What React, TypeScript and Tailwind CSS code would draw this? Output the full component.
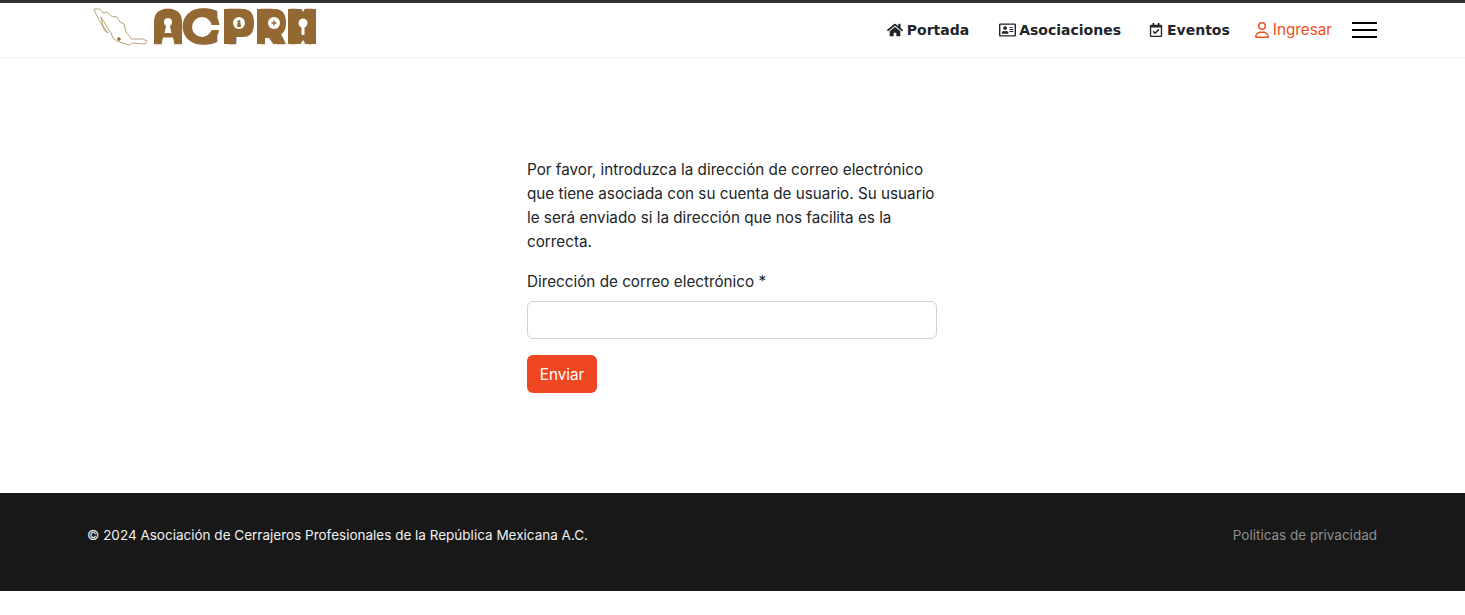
import { FaHome, FaRegAddressCard, FaRegCalendarCheck } from "react-icons/fa";
import { FaRegUser } from "react-icons/fa6";

const brown = "#936832";

// natural glyph width at 45px, squeezed into the slot each letter has in the logo
const letters = [
  { char: "A", x: 62, width: 26, natural: 34.8 },
  { char: "C", x: 91, width: 35, natural: 33 },
  { char: "P", x: 132, width: 27, natural: 33 },
  { char: "R", x: 165, width: 26, natural: 34.6 },
  { char: "M", x: 195, width: 27, natural: 44.8 },
];

function Logo() {
  return (
    <svg width="226" height="44" viewBox="0 0 226 44" className="block overflow-visible">
      <path
        d="M1 1 L7 1 L10 5 L14 4 L18 8 L24 9 L27 14 L31 16 L33 24 L37 29 L38 31 L50 31 L54 33 L52 36 L40 35 L36 37 L30 35 L24 33 L20 30 L18 25 L14 19 L10 12 L8 9 L10 18 L15 25 L12 23 L8 15 L4 8 Z"
        fill="none"
        stroke="#a88a5c"
        strokeWidth="0.8"
      />
      <circle cx="26" cy="31" r="1.8" fill={brown} />
      {/* solid backs so the letters read as heavy blocks */}
      <path d="M61 36 V14 Q61 1 75 1 Q89 1 89 14 V36 Z" fill={brown} />
      <ellipse cx="108" cy="18.5" rx="18.5" ry="18" fill={brown} />
      <path d="M131 1 H150 Q161 1 161 15 Q161 29 150 29 H139 V36 H131 Z" fill={brown} />
      <path d="M164 1 H182 Q193 1 193 15 Q193 24 188 26 L193 36 H164 Z" fill={brown} />
      <path d="M195 1 H223 V36 H195 Z" fill={brown} />
      {letters.map((l) => (
        <text
          key={l.char}
          transform={`translate(${l.x} 35) scale(${l.width / l.natural} 1)`}
          fill={brown}
          stroke={brown}
          strokeWidth="2.5"
          strokeLinejoin="round"
          className="font-['DejaVu_Sans',sans-serif] text-[45px] font-bold"
        >
          {l.char}
        </text>
      ))}
      {/* A keyhole and notch */}
      <circle cx="75" cy="14" r="4" fill="#fff" />
      <path d="M73.5 16 h3 l2 9 h-7 Z" fill="#fff" />
      <path d="M70 29.5 h10 l1.5 7 h-13 Z" fill="#fff" />
      {/* C counter and slit */}
      <circle cx="109" cy="19" r="10" fill="#fff" />
      <path d="M109 17 h20 v5 h-20 Z" fill="#fff" />
      {/* P lock */}
      <circle cx="146" cy="15" r="6" fill="#fff" />
      <circle cx="146" cy="13.5" r="1.6" fill={brown} />
      <path d="M144.5 15 h3 l0.5 4 h-4 Z" fill={brown} />
      {/* R lock and leg */}
      <circle cx="181" cy="15" r="6" fill="#fff" />
      <path d="M178.5 15 h5 M181 12.5 v5" stroke={brown} strokeWidth="1.4" />
      <path d="M172 30 h4 L181 37 h-9 Z" fill="#fff" />
      <path d="M188 27 L194 27 V31 Z" fill="#fff" />
      {/* M keyhole and notches */}
      <circle cx="210" cy="15" r="4.5" fill="#fff" />
      <path d="M208.5 18 h3 V27 h-3 Z" fill="#fff" />
      <path d="M208 0 h4 l-2 4 Z" fill="#fff" />
      <path d="M207 37 L210 32 L213 37 Z" fill="#fff" />
    </svg>
  );
}

function NavLink({ icon, label, gap }: { icon: React.ReactNode; label: string; gap: string }) {
  return (
    <a className={`flex items-center ${gap} font-['DejaVu_Sans',sans-serif] text-sm font-bold text-[#212529]`}>
      {icon}
      {label}
    </a>
  );
}

export default function App() {
  return (
    <div className="min-h-[615px] bg-white font-['Inter',sans-serif] text-[15.25px] text-[#212529]">
      <header className="h-[58px] border-t-[3px] border-b border-[#333] border-b-[#f0f0f0]">
        <div className="ml-[87px] flex h-full w-[1290px] items-center justify-between pl-[6px]">
          <Logo />
          <nav className="flex items-center">
            <NavLink gap="gap-1" icon={<FaHome className="h-4 w-4" />} label="Portada" />
            <div className="ml-[30px]">
              <NavLink gap="gap-[3px]" icon={<FaRegAddressCard className="h-4 w-[17px]" />} label="Asociaciones" />
            </div>
            <div className="ml-[28px]">
              <NavLink gap="gap-1" icon={<FaRegCalendarCheck className="h-[14px] w-[14px]" />} label="Eventos" />
            </div>
            <a className="ml-[25px] flex items-center gap-1 text-[#f04e23]">
              <FaRegUser className="h-4 w-[14px]" />
              Ingresar
            </a>
            <div className="ml-5 flex w-[25px] flex-col gap-[5px]">
              <span className="h-[2px] bg-black" />
              <span className="h-[2px] bg-black" />
              <span className="h-[2px] bg-black" />
            </div>
          </nav>
        </div>
      </header>
      <main className="h-[435px] pt-[100px]">
        <form className="ml-[527px] w-[410px]">
          <p className="leading-6">
            Por favor, introduzca la dirección de correo electrónico que tiene asociada con su cuenta de usuario. Su
            usuario le será enviado si la dirección que nos facilita es la correcta.
          </p>
          <label className="mt-4 block leading-6">Dirección de correo electrónico *</label>
          <input className="mt-[7px] block h-[38px] w-full rounded-md border border-[#ced4da] bg-white" />
          <button type="button" className="mt-4 block h-[38px] w-[70px] rounded-md bg-[#ee4620] pt-[2px] text-white">
            Enviar
          </button>
        </form>
      </main>
      <footer className="h-[98px] bg-[#181818]">
        <div className="ml-[87px] flex w-[1290px] justify-between pt-[32px] text-[13.5px] leading-5">
          <span className="text-[#f1f1f1]">© 2024 Asociación de Cerrajeros Profesionales de la República Mexicana A.C.</span>
          <a className="text-[#8f8f8f]">Politicas de privacidad</a>
        </div>
      </footer>
    </div>
  );
}
